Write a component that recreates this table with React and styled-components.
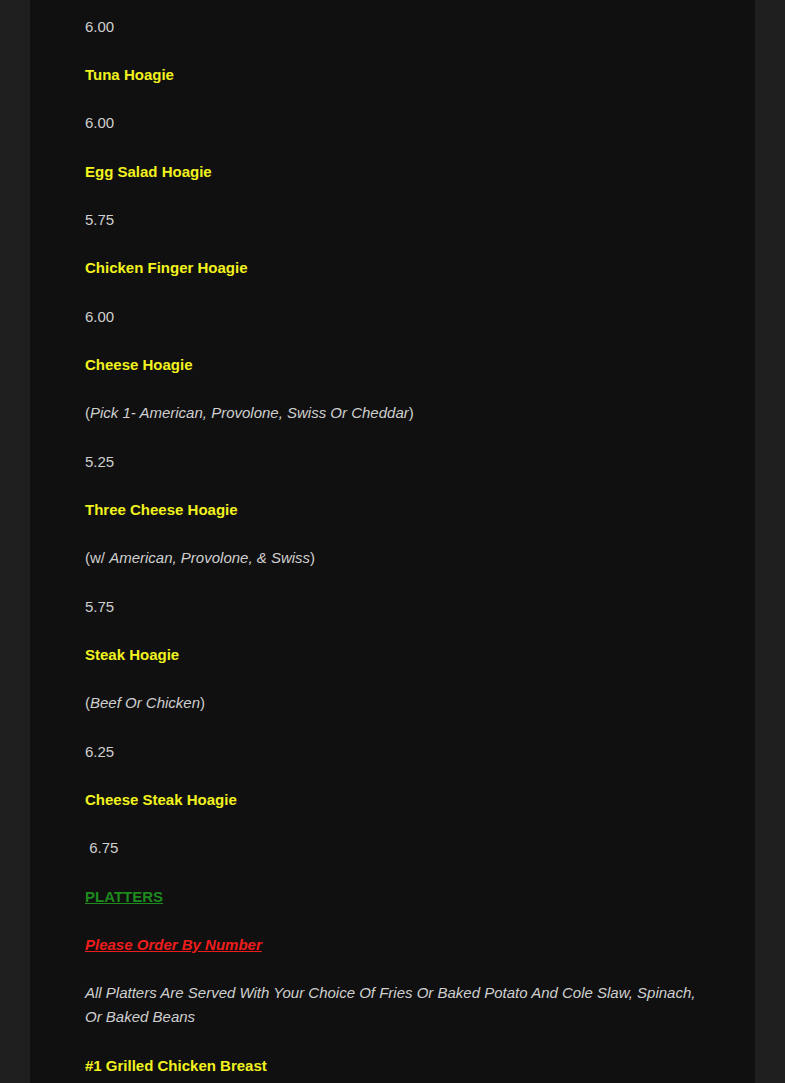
import React from "react";
import styled, { createGlobalStyle } from "styled-components";

const Global = createGlobalStyle`
  html, body { margin: 0; padding: 0; background: #1f1f1f; }
  body { font-family: "Liberation Sans", Arial, sans-serif; }
`;

const Page = styled.div`
  display: flex;
  justify-content: center;
  min-height: 1083px;
`;

const Panel = styled.main`
  width: 725px;
  margin-left: 30px;
  margin-right: 30px;
  background: #101010;
  padding: 14.6px 55px 0;
  box-sizing: border-box;
  min-height: 1083px;
`;

const P = styled.p`
  margin: 0 0 24.17px;
  font-size: 15px;
  line-height: 24.17px;
  color: #cfcfcf;
`;

const Title = styled.strong`
  color: ${(p) => p.$color || "#f2f21e"};
  font-weight: 700;
  text-decoration: ${(p) => (p.$underline ? "underline" : "none")};
  font-style: ${(p) => (p.$italic ? "italic" : "normal")};
`;

const Em = styled.em`
  font-style: italic;
`;

const items = [
  { t: "price", v: "6.00" },
  { t: "title", v: "Tuna Hoagie" },
  { t: "price", v: "6.00" },
  { t: "title", v: "Egg Salad Hoagie" },
  { t: "price", v: "5.75" },
  { t: "title", v: "Chicken Finger Hoagie" },
  { t: "price", v: "6.00" },
  { t: "title", v: "Cheese Hoagie" },
  { t: "note", pre: "(", v: "Pick 1- American, Provolone, Swiss Or Cheddar", post: ")" },
  { t: "price", v: "5.25" },
  { t: "title", v: "Three Cheese Hoagie" },
  { t: "note", pre: "(w/ ", v: "American, Provolone, & Swiss", post: ")" },
  { t: "price", v: "5.75" },
  { t: "title", v: "Steak Hoagie" },
  { t: "note", pre: "(", v: "Beef Or Chicken", post: ")" },
  { t: "price", v: "6.25" },
  { t: "title", v: "Cheese Steak Hoagie" },
  { t: "price", v: "\u00a06.75" },
];

export default function App() {
  return (
    <>
      <Global />
      <Page>
        <Panel>
          {items.map((it, i) => {
            if (it.t === "title")
              return (
                <P key={i}>
                  <Title>{it.v}</Title>
                </P>
              );
            if (it.t === "note")
              return (
                <P key={i}>
                  {it.pre}
                  <Em>{it.v}</Em>
                  {it.post}
                </P>
              );
            return <P key={i}>{it.v}</P>;
          })}
          <P>
            <Title $color="#1e8a1e" $underline>PLATTERS</Title>
          </P>
          <P>
            <Title $color="#ee1c1c" $underline $italic>Please Order By Number</Title>
          </P>
          <P>
            <Em>
              All Platters Are Served With Your Choice Of Fries Or Baked Potato And Cole Slaw, Spinach,
              Or Baked Beans
            </Em>
          </P>
          <P>
            <Title>#1 Grilled Chicken Breast</Title>
          </P>
        </Panel>
      </Page>
    </>
  );
}
